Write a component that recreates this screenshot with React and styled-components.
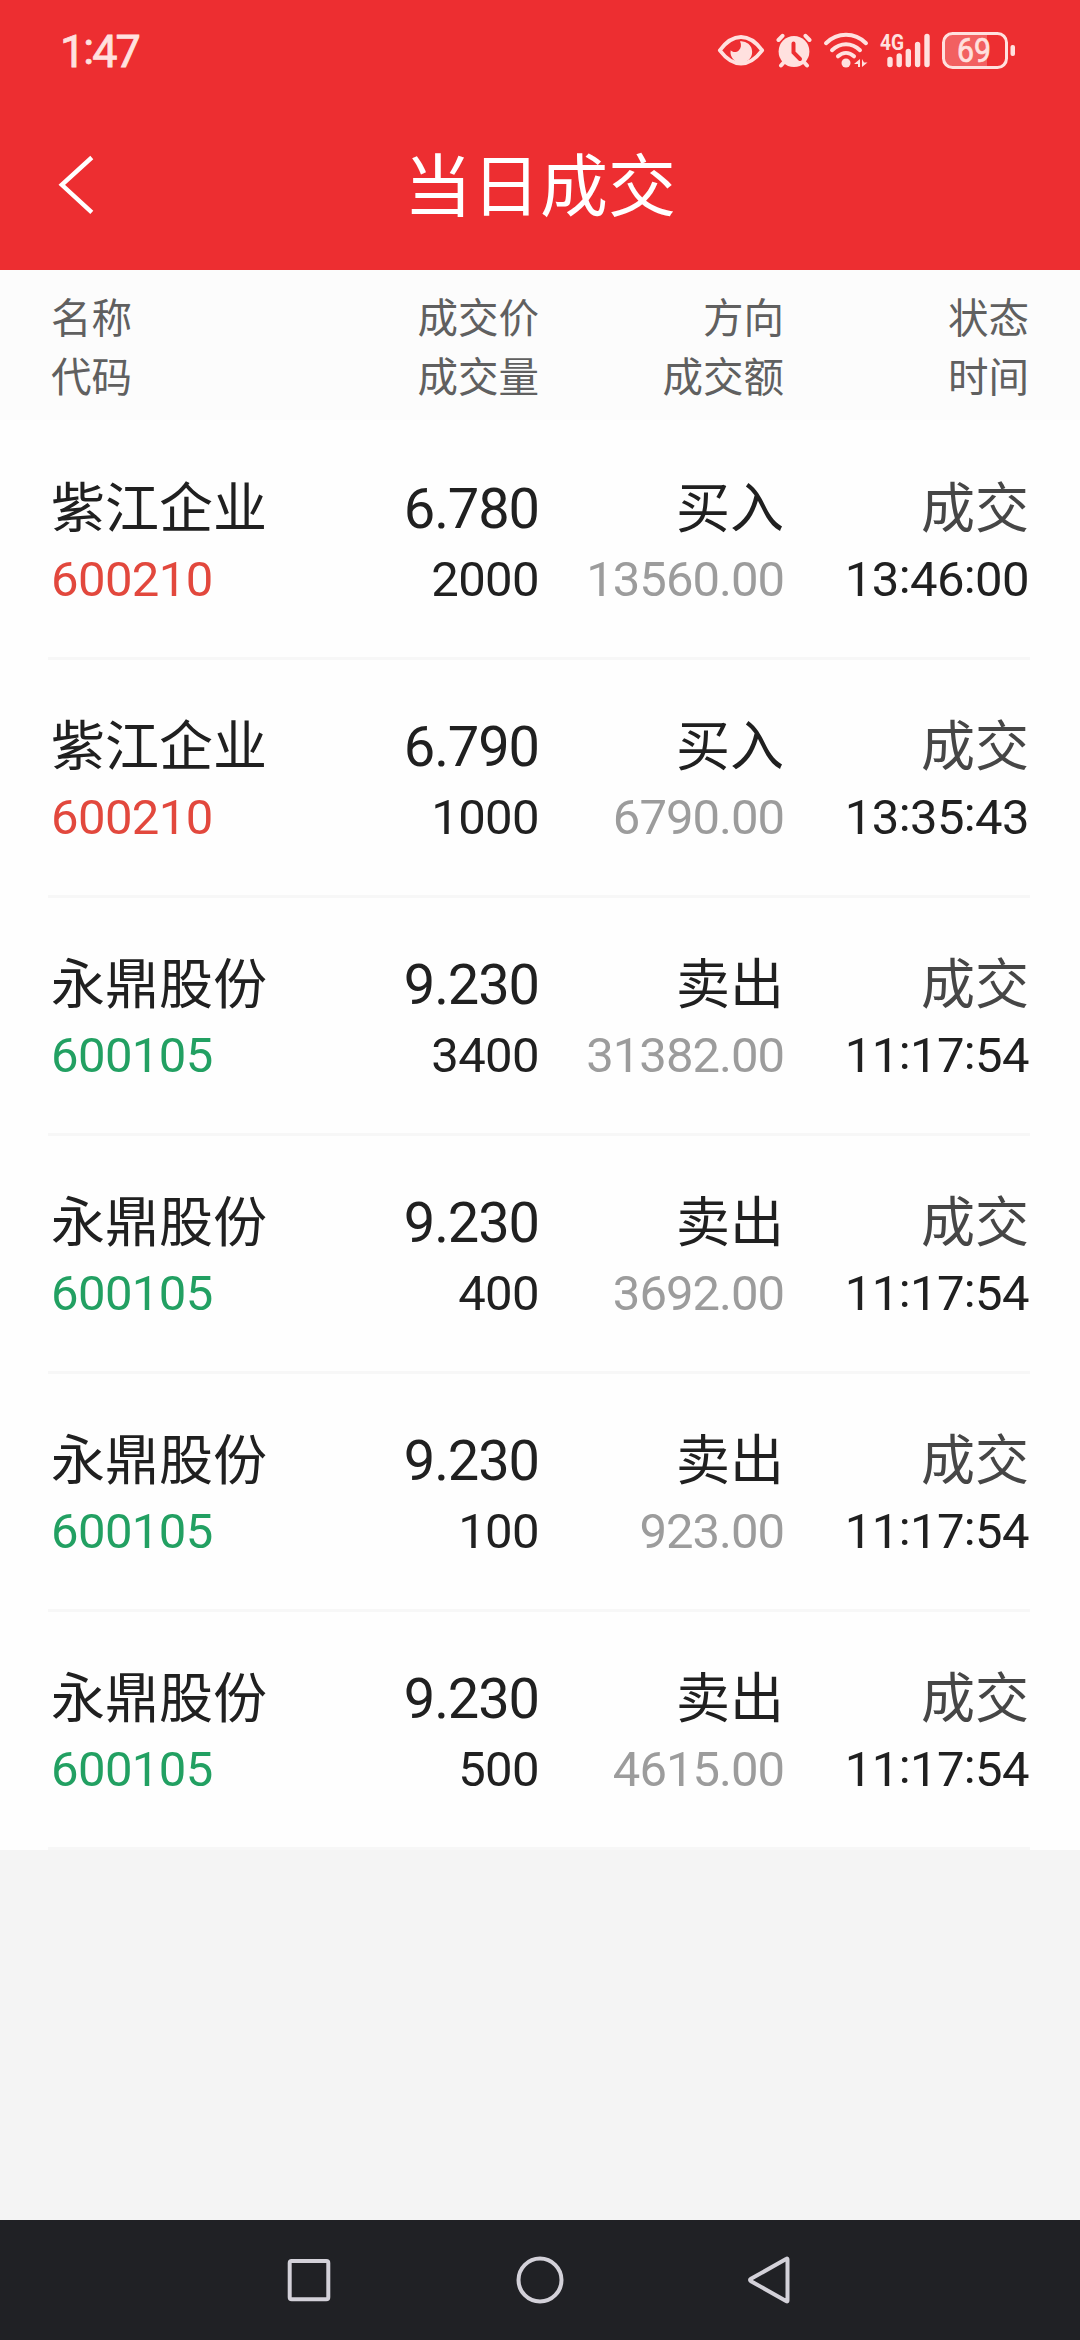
import React from 'react'
import styled, { createGlobalStyle } from 'styled-components'

const ink = '#ffe1df'

const deals = [
   { name: '紫江企业', code: '600210', price: '6.780', amount: '2000', side: '买入', total: '13560.00', time: '13:46:00' },
   { name: '紫江企业', code: '600210', price: '6.790', amount: '1000', side: '买入', total: '6790.00', time: '13:35:43' },
   { name: '永鼎股份', code: '600105', price: '9.230', amount: '3400', side: '卖出', total: '31382.00', time: '11:17:54' },
   { name: '永鼎股份', code: '600105', price: '9.230', amount: '400', side: '卖出', total: '3692.00', time: '11:17:54' },
   { name: '永鼎股份', code: '600105', price: '9.230', amount: '100', side: '卖出', total: '923.00', time: '11:17:54' },
   { name: '永鼎股份', code: '600105', price: '9.230', amount: '500', side: '卖出', total: '4615.00', time: '11:17:54' },
]

const Time = ({ value }) =>
   value.split(':').map((part, i) => (
      <React.Fragment key={i}>
         {i > 0 && <Colon>:</Colon>}
         {part}
      </React.Fragment>
   ))

const StatusIcons = () => (
   <StyledIcons>
      <svg width="50" height="40" viewBox="716 30 50 40">
         <path
            d="M719.8 50.3C726 42 733 37 741 37s15 5 21.200 13.300C756 58.500 749 63.500 741 63.500s-15-5-21.200-13.200z"
            fill="none"
            stroke={ink}
            strokeWidth="3.800"
            strokeLinejoin="round"
         />
         <path d="M740 41.300a10.800 10.800 0 1 1-9.300 8.900c1.600 2 5.500 2.600 8 .3 2.600-2.400 2.900-6 1.300-9.200z" fill={ink} />
      </svg>
      <svg width="36" height="40" viewBox="776 30 36 40">
         <g stroke={ink} strokeWidth="4" strokeLinecap="round">
            <path d="M778.500 40l4-4.200M809.500 40l-4-4.200M785 61l-4 4.500M803 61l4 4.500" />
         </g>
         <circle cx="794" cy="51.500" r="15.400" fill={ink} />
         <path d="M793.500 43.500v9l6.500 6.500" fill="none" stroke="#ed2e31" strokeWidth="4" strokeLinecap="round" />
      </svg>
      <svg width="46" height="40" viewBox="823 30 46 40">
         <g fill="none" stroke={ink} strokeWidth="4" strokeLinecap="round">
            <path d="M826 43.200c11.500-11.200 28.500-11.200 40 0" />
            <path d="M832 50.200c8.500-8 19.500-8 28 0" />
            <path d="M838 56.300c5-4.500 11-4.500 16 0" />
         </g>
         <circle cx="846" cy="63" r="4.500" fill={ink} />
         <path d="M854 64l6-5v8h-2v-3zM862 67v-8l2 3.500h3.500z" fill={ink} />
      </svg>
      <svg width="52" height="60" viewBox="879 20 52 60">
         <text x="880" y="50" fontSize="22" fontWeight="700" fill={ink} textLength="24" lengthAdjust="spacingAndGlyphs">4G</text>
         <g stroke={ink} strokeWidth="5.400" strokeLinecap="round">
            <path d="M890 59.500v5M899.200 56v8.500M908.300 51.500v13M917.600 44.500v20M927 36.500v28" />
         </g>
      </svg>
      <svg width="75" height="40" viewBox="941 30 75 40">
         <path d="M951 35h36v31h-36q-6 0-6-6V41q0-6 6-6z" fill={ink} fillOpacity=".28" />
         <rect x="943.500" y="33.500" width="63" height="34" rx="9" fill="none" stroke={ink} strokeWidth="3" />
         <rect x="1010.500" y="45" width="4.500" height="11" rx="2" fill={ink} />
         <text x="957" y="62" fontSize="32.500" fill={ink} stroke={ink} strokeWidth=".7" textLength="34" lengthAdjust="spacingAndGlyphs">69</text>
      </svg>
   </StyledIcons>
)

const App = () => {
   return (
      <StyledScreen>
         <GlobalStyle />
         <StyledStatus>
            <StyledClock>
               <Time value="1:47" />
            </StyledClock>
            <StatusIcons />
         </StyledStatus>
         <StyledHeader>
            <StyledBack aria-label="返回">
               <svg width="40" height="64" viewBox="57 153 40 64">
                  <path d="M91.800 157.500L61.800 184.800l30 27.600" fill="none" stroke="#fff" strokeWidth="4.400" />
               </svg>
            </StyledBack>
            <StyledTitle>当日成交</StyledTitle>
         </StyledHeader>
         <StyledColumns>
            <HeadCell>名称<br />代码</HeadCell>
            <HeadCell>成交价<br />成交量</HeadCell>
            <HeadCell>方向<br />成交额</HeadCell>
            <HeadCell>状态<br />时间</HeadCell>
         </StyledColumns>
         <StyledList>
            {deals.map((deal, i) => (
               <StyledDeal key={i}>
                  <StyledRow>
                     <Cell>
                        <Main>{deal.name}</Main>
                        <Sub $color={deal.side === '买入' ? '#e2483d' : '#22a062'}>{deal.code}</Sub>
                     </Cell>
                     <Cell>
                        <Price>{deal.price}</Price>
                        <Sub>{deal.amount}</Sub>
                     </Cell>
                     <Cell>
                        <Main>{deal.side}</Main>
                        <Total>{deal.total}</Total>
                     </Cell>
                     <Cell>
                        <Main $color="#464646">成交</Main>
                        <Sub><Time value={deal.time} /></Sub>
                     </Cell>
                  </StyledRow>
                  <StyledLine />
               </StyledDeal>
            ))}
         </StyledList>
         <StyledNav>
            <svg viewBox="0 0 48 48">
               <rect x="4.700" y="5" width="38.600" height="38.200" rx="2" />
            </svg>
            <svg viewBox="0 0 48 48">
               <circle cx="24" cy="24" r="21.500" />
            </svg>
            <svg viewBox="0 0 48 48">
               <path d="M39.500 2.800q1-.6 1 .7v41q0 1.300-1 .7L4 25.200q-2-1.200 0-2.400z" />
            </svg>
         </StyledNav>
      </StyledScreen>
   )
}

export default App

const GlobalStyle = createGlobalStyle`
   body {
      margin: 0;
      font-family: Roboto, "Noto Sans CJK SC", sans-serif;
   }
   svg {
      display: block;
   }
`

const StyledScreen = styled.div`
   display: flex;
   flex-direction: column;
   width: 1080px;
   height: 2340px;
   overflow: hidden;
   background-color: #f4f4f4;
`

const StyledStatus = styled.div`
   display: flex;
   align-items: center;
   justify-content: space-between;
   height: 100px;
   padding: 0 64px 0 60px;
   background-color: #ed2e31;
`

const StyledClock = styled.div`
   font-size: 45px;
   line-height: 100px;
   padding-top: 3px;
   letter-spacing: -2px;
   color: ${ink};
   -webkit-text-stroke: 0.8px ${ink};
`

const StyledIcons = styled.div`
   display: flex;
   align-items: center;
   gap: 10.25px;
`

const StyledHeader = styled.header`
   display: grid;
   grid-template-columns: 200px 1fr 200px;
   align-items: center;
   height: 170px;
   background-color: #ed2e31;
`

const StyledBack = styled.button`
   margin: 0;
   padding: 0 57px;
   border: none;
   background: none;
`

const StyledTitle = styled.h1`
   margin: 0;
   padding-top: 6px;
   font-size: 68px;
   font-weight: 400;
   line-height: 80px;
   text-align: center;
   color: #fff;
`

const StyledRow = styled.div`
   display: grid;
   grid-template-columns: 300px 188px 245px 245px;
   height: 183px;
   padding: 52px 51px 0;
`

const StyledColumns = styled(StyledRow)`
   height: 130px;
   padding-top: 20px;
   background-color: #fcfcfc;
`

const HeadCell = styled.div`
   font-size: 40.5px;
   line-height: 59px;
   text-align: right;
   color: #606060;

   &:first-child {
      text-align: left;
   }
`

const StyledList = styled.div`
   flex: none;
   padding-top: 2px;
   background-color: #fefefe;
`

const StyledDeal = styled.div`
   height: 238px;
`

const Cell = styled.div`
   text-align: right;
   white-space: nowrap;

   &:first-child {
      text-align: left;
   }
`

const Main = styled.div`
   font-size: 54px;
   line-height: 71px;
   color: ${({ $color }) => $color || '#202020'};
`

const Price = styled(Main)`
   font-size: 56px;
   letter-spacing: -1.1px;
`

const Sub = styled.div`
   font-size: 49px;
   line-height: 69px;
   letter-spacing: -0.6px;
   color: ${({ $color }) => $color || '#202020'};
`

const Total = styled(Sub)`
   letter-spacing: -1px;
   color: #9c9c9c;
`

const Colon = styled.span`
   line-height: 0;
   vertical-align: 0.07em;
`

const StyledLine = styled.div`
   height: 3px;
   margin: 0 50px 0 48px;
   background-color: #f7f7f7;
`

const StyledNav = styled.nav`
   display: flex;
   align-items: center;
   justify-content: center;
   gap: 183px;
   height: 120px;
   margin-top: auto;
   background-color: #202125;

   svg {
      width: 48px;
      height: 48px;
      fill: none;
      stroke: #d3d1d9;
      stroke-width: 4;
   }
`
